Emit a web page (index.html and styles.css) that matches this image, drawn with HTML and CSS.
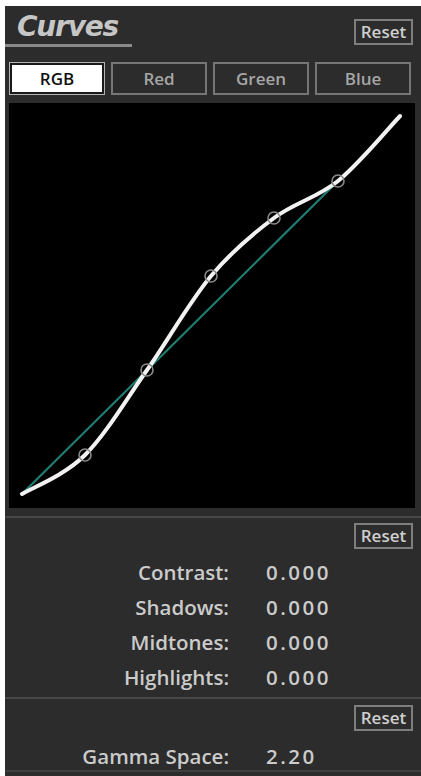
FILE: index.html
```html
<!DOCTYPE html>
<html>
<head>
<meta charset="utf-8">
<link rel="stylesheet" href="styles.css">
</head>
<body>
<div class="panel">
  <div class="header">
    <div class="title-wrap"><span class="title">Curves</span></div>
    <div class="reset reset-top">Reset</div>
  </div>
  <div class="tabs">
    <div class="tab active">RGB</div>
    <div class="tab">Red</div>
    <div class="tab">Green</div>
    <div class="tab">Blue</div>
  </div>
  <div class="graph">
    <svg width="406" height="405" viewBox="9 103 406 405" xmlns="http://www.w3.org/2000/svg">
      <line x1="22" y1="494" x2="338" y2="181" stroke="#1f7d72" stroke-width="2.2"/>
      <path d="M22 494 C32.5 487.5 64.2 475.7 85 455 C105.8 434.3 126 399.8 147 370 C168 340.2 189.8 301.3 211 276 C232.2 250.7 252.8 233.8 274 218 C295.2 202.2 317 198 338 181 C359 164 389.7 126.8 400 116" fill="none" stroke="#f2f2f2" stroke-width="4" stroke-linecap="round"/>
      <g fill="none" stroke="#8a8a8a" stroke-width="1.6">
        <circle cx="85" cy="455" r="6"/>
        <circle cx="147" cy="370" r="6"/>
        <circle cx="211" cy="276" r="6"/>
        <circle cx="274" cy="218" r="6"/>
        <circle cx="338" cy="181" r="6"/>
      </g>
    </svg>
  </div>
  <div class="sep sep1"></div>
  <div class="reset reset-mid">Reset</div>
  <div class="params">
    <div class="label">Contrast:</div><div class="value">0.000</div>
    <div class="label">Shadows:</div><div class="value">0.000</div>
    <div class="label">Midtones:</div><div class="value">0.000</div>
    <div class="label">Highlights:</div><div class="value">0.000</div>
  </div>
  <div class="sep sep2"></div>
  <div class="reset reset-mid2">Reset</div>
  <div class="params gamma">
    <div class="label">Gamma Space:</div><div class="value">2.20</div>
  </div>
  <div class="sep sep3"></div>
</div>
</body>
</html>
```
FILE: styles.css
```css
html, body {
  margin: 0;
  padding: 0;
  background: #ffffff;
}
body {
  padding: 6px 0 0 5px;
  font-family: "Open Sans", "Liberation Sans", sans-serif;
}
.panel {
  width: 416px;
  height: 770px;
  background: #2c2c2c;
  display: flex;
  flex-direction: column;
  overflow: hidden;
}
.header {
  height: 50px;
  display: flex;
  justify-content: space-between;
  align-items: flex-start;
}
.title-wrap {
  width: 127px;
  height: 35px;
  margin-top: 3px;
  border-bottom: 3px solid #8a8a8a;
  box-sizing: content-box;
}
.title {
  display: block;
  padding-left: 12px;
  padding-top: 2px;
  font-family: "DejaVu Sans", sans-serif;
  font-weight: bold;
  font-style: italic;
  font-size: 28px;
  line-height: 32px;
  color: #c6c6c6;
  letter-spacing: -1.2px;
}
.reset {
  width: 59px;
  height: 26px;
  box-sizing: border-box;
  border: 2px solid #7e7e7e;
  color: #cfcfcf;
  font-weight: 600;
  font-size: 17px;
  line-height: 22px;
  text-align: center;
  align-self: flex-end;
  margin-right: 8px;
}
.reset-top {
  margin-top: 13px;
  align-self: flex-start;
}
.tabs {
  margin-top: 6px;
  margin-left: 4px;
  height: 33px;
  display: flex;
  gap: 6px;
}
.tab {
  width: 96px;
  height: 33px;
  box-sizing: border-box;
  border: 2px solid #767676;
  color: #a6a6a6;
  font-weight: 600;
  font-size: 17px;
  line-height: 29px;
  text-align: center;
}
.tab.active {
  border: 1px solid #b4b4b4;
  box-shadow: inset 0 0 0 2px #1a1a1a;
  background: #ffffff;
  color: #111111;
  line-height: 31px;
}
.graph {
  margin-top: 8px;
  margin-left: 4px;
  width: 406px;
  height: 405px;
  background: #000000;
}
.graph svg {
  display: block;
}
.sep {
  height: 2px;
  background: #474747;
  flex-shrink: 0;
}
.sep1 { margin-top: 8px; }
.reset-mid { margin-top: 5px; }
.params {
  margin-top: 6px;
  display: grid;
  grid-template-columns: 224px auto;
  column-gap: 37px;
  grid-auto-rows: 35px;
  align-items: center;
  color: #cbcbcb;
  font-size: 20.5px;
  font-weight: 600;
}
.label {
  text-align: right;
  line-height: 35px;
}
.value {
  letter-spacing: 2.5px;
  line-height: 35px;
}
.sep2 { margin-top: 2px; }
.reset-mid2 { margin-top: 6px; }
.gamma {
  margin-top: 11px;
  grid-auto-rows: 28px;
}
.gamma .label, .gamma .value {
  line-height: 28px;
}
.sep3 { margin-top: 0; background: #3e3e3e; }
```
